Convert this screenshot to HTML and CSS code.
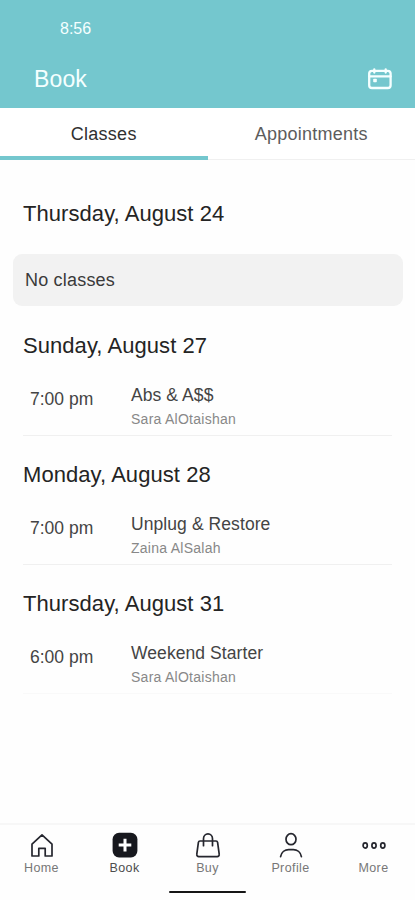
FILE: index.html
```html
<!DOCTYPE html>
<html lang="en">
<head>
<meta charset="utf-8">
<meta name="viewport" content="width=device-width, initial-scale=1">
<title>Book</title>
<link rel="stylesheet" href="styles.css">
</head>
<body>
<div class="app">
  <header class="header">
    <div class="status">8:56</div>
    <div class="titlebar">
      <h1 class="title">Book</h1>
      <svg class="calendar" viewBox="0 0 26 24" fill="none" stroke="currentColor" stroke-width="2.3" stroke-linecap="round">
        <rect x="2.2" y="3.8" width="21.4" height="17.2" rx="2.8"/>
        <path d="M2.2 9.4h21.400M7.300 2.400v3.200M18.700 2.400v3.200"/>
        <rect x="6.200" y="11.700" width="3.600" height="3.600" rx=".8" fill="currentColor" stroke="none"/>
      </svg>
    </div>
  </header>
  <nav class="tabs">
    <div class="tab tab-active">Classes</div>
    <div class="tab">Appointments</div>
  </nav>
  <main class="schedule">
    <section class="day">
      <h2 class="date">Thursday, August 24</h2>
      <div class="empty">No classes</div>
    </section>
    <section class="day">
      <h2 class="date">Sunday, August 27</h2>
      <div class="session">
        <div class="time">7:00 pm</div>
        <div class="info"><div class="name">Abs &amp; A$$</div><div class="coach">Sara AlOtaishan</div></div>
      </div>
    </section>
    <section class="day">
      <h2 class="date">Monday, August 28</h2>
      <div class="session">
        <div class="time">7:00 pm</div>
        <div class="info"><div class="name">Unplug &amp; Restore</div><div class="coach">Zaina AlSalah</div></div>
      </div>
    </section>
    <section class="day">
      <h2 class="date">Thursday, August 31</h2>
      <div class="session session-last">
        <div class="time">6:00 pm</div>
        <div class="info"><div class="name">Weekend Starter</div><div class="coach">Sara AlOtaishan</div></div>
      </div>
    </section>
  </main>
  <footer class="footer">
    <nav class="nav">
      <div class="nav-item">
        <svg class="icon" viewBox="0 0 26 26"><path d="M3 24V12.200L13 2.800l10 9.400V24h-6.800v-7.700H9.800V24z"/></svg>
        <span>Home</span>
      </div>
      <div class="nav-item nav-active">
        <svg class="icon" viewBox="0 0 26 26"><rect class="solid" x=".6" y=".8" width="24.8" height="24.6" rx="6.500"/><path class="plus" d="M13 6.800v12.600M6.700 13.100h12.600"/></svg>
        <span>Book</span>
      </div>
      <div class="nav-item">
        <svg class="icon" viewBox="0 0 26 26"><path d="M5 9h16a1.600 1.600 0 0 1 1.600 1.300l1.600 11.900a2 2 0 0 1-2 2.400H3.800a2 2 0 0 1-2-2.400L3.400 10.300A1.600 1.600 0 0 1 5 9zM8.500 13.700V6.700a4.500 4.800 0 0 1 9 0v7"/></svg>
        <span>Buy</span>
      </div>
      <div class="nav-item">
        <svg class="icon" viewBox="0 0 26 26"><ellipse cx="13" cy="7.200" rx="5" ry="5.500"/><path d="M2.600 24.600c.8-4.600 4.500-7 8-7h4.800c3.500 0 7.200 2.400 8 7"/></svg>
        <span>Profile</span>
      </div>
      <div class="nav-item">
        <svg class="icon" viewBox="0 0 26 26"><ellipse cx="4.200" cy="13.500" rx="2.100" ry="2.600"/><ellipse cx="13" cy="13.500" rx="2.100" ry="2.600"/><ellipse cx="21.800" cy="13.500" rx="2.100" ry="2.600"/></svg>
        <span>More</span>
      </div>
    </nav>
    <div class="handle"></div>
  </footer>
</div>
</body>
</html>
```
FILE: styles.css
```css
* { box-sizing: border-box; }
body {
  margin: 0;
  background: #fefefe;
  color: #242424;
  font-family: "Liberation Sans", Arial, sans-serif;
}
.app {
  display: flex;
  flex-direction: column;
  height: 900px;
  overflow: hidden;
}
.header {
  height: 108px;
  padding-top: 18px;
  background: #74c7ce;
  color: #f5ffff;
}
.status {
  padding-left: 60px;
  font-size: 16px;
  line-height: 21px;
}
.titlebar {
  display: flex;
  align-items: center;
  justify-content: space-between;
  height: 30px;
  margin-top: 25px;
  padding: 0 22px 0 34px;
}
.title {
  margin: 0;
  font-size: 23px;
  font-weight: 400;
  letter-spacing: .15px;
  line-height: 30px;
}
.calendar { width: 26px; height: 24px; }
.tabs {
  display: flex;
  height: 52px;
  background: #fff;
}
.tab {
  flex: 1;
  border-bottom: 1px solid #f0f0f0;
  color: #5c5c5c;
  font-size: 18px;
  letter-spacing: .25px;
  line-height: 52px;
  text-align: center;
}
.tab-active {
  border-bottom: 4px solid #74c7ce;
  color: #303030;
}
.schedule { flex: 1; padding: 39px 12px 0 13px; }
.date {
  margin: 0 0 0 10px;
  font-size: 22px;
  font-weight: 400;
  letter-spacing: .06px;
  line-height: 30px;
}
.empty {
  height: 52px;
  margin: 25px 0;
  padding-left: 12px;
  border-radius: 9px;
  background: #f2f2f2;
  color: #3a3a3a;
  font-size: 18px;
  letter-spacing: .2px;
  line-height: 52px;
}
.session {
  display: grid;
  grid-template-columns: 101px 1fr;
  height: 75px;
  margin: 0 11px 24px 10px;
  padding-left: 7px;
  border-bottom: 1px solid #f0f0f0;
  color: #444;
}
.session-last { border-color: #f9f9f9; }
.time {
  padding-top: 27px;
  font-size: 17.500px;
  line-height: 22px;
}
.info { padding-top: 23px; }
.name {
  font-size: 17.500px;
  letter-spacing: .08px;
  line-height: 22px;
}
.coach {
  margin-top: 3px;
  color: #888;
  font-size: 14px;
  letter-spacing: .26px;
  line-height: 20px;
}
.footer {
  height: 77px;
  border-top: 2px solid #f7f7f7;
}
.nav {
  display: grid;
  grid-template-columns: repeat(5, 1fr);
  padding-top: 7px;
}
.nav-item {
  display: flex;
  flex-direction: column;
  align-items: center;
  color: #777;
  font-size: 12.500px;
  letter-spacing: .4px;
  line-height: 16px;
}
.nav-active { color: #4d4d4d; }
.icon {
  width: 26px;
  height: 26px;
  margin-bottom: 2px;
  fill: none;
  stroke: #25262e;
  stroke-width: 1.700;
  stroke-linejoin: round;
  stroke-linecap: round;
}
.icon .solid { fill: #17181e; stroke: none; }
.icon .plus { stroke: #fff; stroke-width: 3; stroke-linecap: butt; }
.handle {
  width: 77px;
  height: 2px;
  margin: 15px auto 0;
  border-radius: 1px;
  background: #151515;
}
```
